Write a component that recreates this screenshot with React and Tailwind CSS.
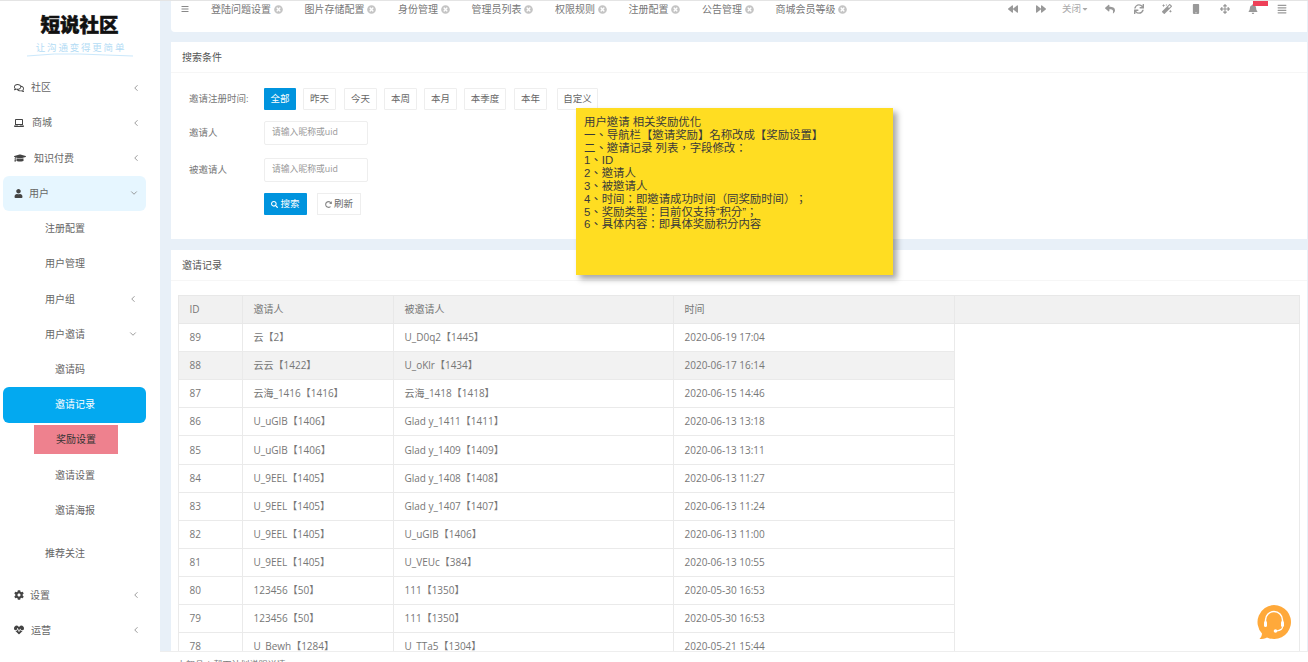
import React from "react";
import {
  FaRegComments, FaLaptop, FaGraduationCap, FaUser, FaCog, FaHeartbeat, FaSearch,
  FaBackward, FaForward, FaReply, FaSync, FaMagic, FaMobile, FaArrowsAlt, FaBell, FaAlignJustify,
  FaCaretDown, FaBars, FaTimesCircle, FaRedoAlt,
} from "react-icons/fa";
import { LuChevronLeft, LuChevronDown } from "react-icons/lu";

const sans = { fontFamily: '"Open Sans","Noto Sans CJK SC",sans-serif' };

const tabs = ["登陆问题设置", "图片存储配置", "身份管理", "管理员列表", "权限规则", "注册配置", "公告管理", "商城会员等级"];
const ranges = [
  { label: "全部", cls: "w-[32px]", active: true },
  { label: "昨天", cls: "w-[33px] ml-[7px]" },
  { label: "今天", cls: "w-[33px] ml-[8px]" },
  { label: "本周", cls: "w-[33px] ml-[7px]" },
  { label: "本月", cls: "w-[33px] ml-[7px]" },
  { label: "本季度", cls: "w-[42px] ml-[7px]" },
  { label: "本年", cls: "w-[33px] ml-[8px]" },
  { label: "自定义", cls: "w-[41px] ml-[10px]" },
];
const rows = [
  ["89", "云【2】", "U_D0q2【1445】", "2020-06-19 17:04"],
  ["88", "云云【1422】", "U_oKlr【1434】", "2020-06-17 16:14"],
  ["87", "云海_1416【1416】", "云海_1418【1418】", "2020-06-15 14:46"],
  ["86", "U_uGIB【1406】", "Glad y_1411【1411】", "2020-06-13 13:18"],
  ["85", "U_uGIB【1406】", "Glad y_1409【1409】", "2020-06-13 13:11"],
  ["84", "U_9EEL【1405】", "Glad y_1408【1408】", "2020-06-13 11:27"],
  ["83", "U_9EEL【1405】", "Glad y_1407【1407】", "2020-06-13 11:24"],
  ["82", "U_9EEL【1405】", "U_uGIB【1406】", "2020-06-13 11:00"],
  ["81", "U_9EEL【1405】", "U_VEUc【384】", "2020-06-13 10:55"],
  ["80", "123456【50】", "111【1350】", "2020-05-30 16:53"],
  ["79", "123456【50】", "111【1350】", "2020-05-30 16:53"],
  ["78", "U_Bewh【1284】", "U_TTa5【1304】", "2020-05-21 15:44"],
];
const noteLines = [
  "用户邀请 相关奖励优化",
  "一、导航栏【邀请奖励】名称改成【奖励设置】",
  "二、邀请记录 列表，字段修改：",
  "1、ID",
  "2、邀请人",
  "3、被邀请人",
  "4、时间：即邀请成功时间（同奖励时间）；",
  "5、奖励类型：目前仅支持“积分”；",
  "6、具体内容：即具体奖励积分内容",
];

const MenuRow = ({ icon: Icon, label, gap, size = "text-[10px]", open }) => (
  <div className="h-[35.25px] flex items-center pl-[14px] pr-[19px] text-[10px] text-[#666]">
    <Icon className={`${size} text-[#444] shrink-0`} />
    <span className={gap}>{label}</span>
    <span className="ml-auto text-[#888]">
      {open ? <LuChevronDown className="text-[10px]" /> : <LuChevronLeft className="text-[10px]" />}
    </span>
  </div>
);

const SubRow = ({ label, indent = "pl-[45px]", arrow }) => (
  <div className={`h-[35.25px] flex items-center pr-[22px] text-[10px] text-[#666] ${indent}`}>
    <span>{label}</span>
    {arrow === "left" && <LuChevronLeft className="ml-auto text-[10px] text-[#888]" />}
    {arrow === "down" && <LuChevronDown className="ml-auto text-[10px] text-[#888]" />}
  </div>
);

const Sidebar = () => (
  <aside className="w-[160px] shrink-0 bg-white">
    <div className="h-[70px] flex flex-col items-center pr-[1px] pt-[12px]">
      <div className="text-[19.5px] leading-[25px] font-black text-[#111] [-webkit-text-stroke:0.5px_#111]">短说社区</div>
      <div className="mt-[5px] text-[9.5px] leading-[11px] text-[#b4dcf5] tracking-[1.8px] pl-[3px]">让沟通变得更简单</div>
      <svg width="110" height="4" viewBox="0 0 110 4">
        <path d="M2 3 Q 30 0 55 1 T 108 3" fill="none" stroke="#cbe8fb" strokeWidth="1" />
      </svg>
    </div>
    <MenuRow icon={FaRegComments} label="社区" gap="ml-[7px]" />
    <MenuRow icon={FaLaptop} label="商城" gap="ml-[8px]" />
    <MenuRow icon={FaGraduationCap} label="知识付费" size="text-[12px]" gap="ml-[8px]" />
    <div className="ml-[3px] w-[143px] h-[35.25px] rounded-[6px] bg-[#e6f6ff] flex items-center pl-[11px] pr-[7px] text-[10px] text-[#666]">
      <FaUser className="text-[9px] text-[#444]" />
      <span className="ml-[6px]">用户</span>
      <LuChevronDown className="ml-auto text-[10px] text-[#888]" />
    </div>
    <SubRow label="注册配置" />
    <SubRow label="用户管理" />
    <SubRow label="用户组" arrow="left" />
    <SubRow label="用户邀请" arrow="down" />
    <SubRow label="邀请码" indent="pl-[55px]" />
    <div className="ml-[3px] w-[143px] h-[35.25px] rounded-[6px] bg-[#03a9f0] flex items-center pl-[52px] text-[10px] text-white">邀请记录</div>
    <div className="h-[35.25px] pl-[34px] pt-[2px]">
      <div className="w-[84px] h-[29px] bg-[#ee818e] text-[10px] text-[#333] flex items-center justify-center">奖励设置</div>
    </div>
    <SubRow label="邀请设置" indent="pl-[55px]" />
    <SubRow label="邀请海报" indent="pl-[55px]" />
    <div className="mt-[8px]"><SubRow label="推荐关注" /></div>
    <div className="mt-[6px]">
      <MenuRow icon={FaCog} label="设置" gap="ml-[6px]" />
      <MenuRow icon={FaHeartbeat} label="运营" gap="ml-[7px]" />
    </div>
  </aside>
);

const TopBar = () => (
  <div className="relative h-[32px] bg-white rounded-bl-[4px] flex items-start pl-[10px] pr-[11px] pt-[3px] text-[#999]">
    <FaBars className="text-[8px] mt-[2px] text-[#888]" />
    <div className="ml-[22px] flex gap-[22px] text-[10px] leading-[12px] text-[#777]">
      {tabs.map((t) => (
        <span key={t} className="flex items-center gap-[2.5px]">
          {t}
          <FaTimesCircle className="text-[9px] text-[#c4c4c4]" />
        </span>
      ))}
    </div>
    <div className="ml-auto flex items-center h-[12px] text-[#999] text-[10px]">
      <span className="w-[28.5px] flex justify-center"><FaBackward /></span>
      <span className="w-[28.5px] flex justify-center"><FaForward /></span>
      <span className="w-[40px] flex justify-center items-center text-[9.5px] text-[#aaa]">关闭<FaCaretDown className="text-[8px]" /></span>
      <span className="w-[29px] flex justify-center"><FaReply /></span>
      <span className="w-[28.5px] flex justify-center"><FaSync /></span>
      <span className="w-[28.5px] flex justify-center"><FaMagic /></span>
      <span className="w-[28.5px] flex justify-center"><FaMobile /></span>
      <span className="w-[29px] flex justify-center"><FaArrowsAlt /></span>
      <span className="w-[28.5px] flex justify-center"><FaBell /></span>
      <span className="w-[28.5px] flex justify-center"><FaAlignJustify /></span>
    </div>
    <span className="absolute top-0 right-[39px] w-[15px] h-[6px] bg-[#ee4058]" />
  </div>
);

const SearchCard = () => (
  <section className="mt-[10px] h-[197px] bg-white">
    <div className="h-[31px] pl-[11px] flex items-center border-b border-[#f6f6f6] text-[10px] text-[#555]">搜索条件</div>
    <div className="pt-[15px] text-[9.5px] text-[#777]">
      <div className="flex items-center h-[22px]">
        <label className="w-[93px] pl-[18px]">邀请注册时间:</label>
        <div className="flex">
          {ranges.map((r) => (
            <span
              key={r.label}
              className={`h-[22px] flex items-center justify-center text-[9.5px] rounded-[1px] ${r.cls} ${
                r.active ? "bg-[#0094de] text-white" : "border border-[#eee] text-[#666]"
              }`}
            >
              {r.label}
            </span>
          ))}
        </div>
      </div>
      <div className="flex items-center h-[24px] mt-[11px]">
        <label className="w-[93px] pl-[18px]">邀请人</label>
        <div className="w-[104px] h-[24px] border border-[#eee] rounded-[2px] flex items-center pl-[7px] text-[8.8px] text-[#999]">请输入昵称或uid</div>
      </div>
      <div className="flex items-center h-[24px] mt-[13px]">
        <label className="w-[93px] pl-[18px]">被邀请人</label>
        <div className="w-[104px] h-[24px] border border-[#eee] rounded-[2px] flex items-center pl-[7px] text-[8.8px] text-[#999]">请输入昵称或uid</div>
      </div>
      <div className="flex items-center h-[22px] mt-[11px] pl-[93px]">
        <span className="w-[43px] h-[22px] bg-[#0094de] text-white text-[9.5px] flex items-center justify-center gap-[2px] rounded-[1px]">
          <FaSearch className="text-[7px]" />搜索
        </span>
        <span className="ml-[10px] w-[44px] h-[22px] border border-[#eee] text-[#666] text-[9.5px] flex items-center justify-center gap-[2px]">
          <FaRedoAlt className="text-[7px] text-[#888]" />刷新
        </span>
      </div>
    </div>
  </section>
);

const RecordCard = () => (
  <section className="mt-[11px] bg-white pb-[20px]">
    <div className="h-[31px] pl-[11px] flex items-center border-b border-[#f6f6f6] text-[10px] text-[#555]">邀请记录</div>
    <div className="pt-[14px] pl-[7px] pr-[7px]">
      <table className="w-full table-fixed border-collapse text-[10px] text-[#777]">
        <colgroup>
          <col className="w-[64px]" />
          <col className="w-[151px]" />
          <col className="w-[280px]" />
          <col className="w-[281px]" />
          <col />
        </colgroup>
        <thead>
          <tr className="h-[28px] bg-[#f1f1f1]">
            {["ID", "邀请人", "被邀请人", "时间", ""].map((h, i) => (
              <th key={i} className="border border-[#e8e8e8] pl-[10.5px] text-left font-normal">{h}</th>
            ))}
          </tr>
        </thead>
        <tbody>
          {rows.map((r, i) => (
            <tr key={r[0]} className={`${i === 4 ? "h-[29px]" : "h-[28px]"} ${i === 1 ? "bg-[#f2f2f2]" : ""}`}>
              {r.map((c, j) => (
                <td key={j} className="border border-[#eaeaea] pl-[10.5px] whitespace-nowrap">{c}</td>
              ))}
              {i === 0 && <td rowSpan={rows.length} className="border border-[#eaeaea] bg-white" />}
            </tr>
          ))}
        </tbody>
      </table>
    </div>
  </section>
);

export default function App() {
  return (
    <div className="relative w-[1308px] h-[662px] overflow-hidden flex bg-white" style={sans}>
      <Sidebar />
      <main className="flex-1 min-w-0 flex flex-col h-[662px]">
        <div className="h-[651px] overflow-hidden bg-[#e8f0f8] pl-[11px] pr-[1px] shrink-0">
          <TopBar />
          <SearchCard />
          <RecordCard />
        </div>
        <footer className="flex-1 bg-white border-t border-[#eee] pl-[17px] text-[9px] leading-[14px] pt-[6px] text-[#777] overflow-hidden">
          上架品 | 帮下计划说明详情
        </footer>
      </main>

      {/* top hairline */}
      <div className="absolute top-0 left-0 w-full h-px bg-[#e4e4e4]" />

      <div className="absolute left-[576px] top-[108px] w-[317px] h-[167px] bg-[#ffdd22] pt-[8px] pl-[8px] text-[11.4px] leading-[12.8px] text-[#3a3a3a] shadow-[4px_4px_6px_rgba(0,0,0,0.35)] [text-spacing-trim:space-all]"
        style={{ fontFamily: '"Liberation Sans","Noto Sans CJK TC",sans-serif' }}>
        {noteLines.map((l) => <div key={l}>{l}</div>)}
      </div>

      <div className="absolute left-[1256px] top-[604px]">
        <svg width="36" height="36" viewBox="0 0 36 36">
          <path d="M18 1a17 17 0 1 1-7 32.500c-2 1-4.500 1.500-7.500 1.500 1.500-1.500 2.500-3.500 2.500-5.500A17 17 0 0 1 18 1z" fill="#ffa93a" />
          <path d="M9.500 19v-3a8.500 8.500 0 0 1 17 0v3" fill="none" stroke="#fff" strokeWidth="1.500" />
          <rect x="8" y="17" width="3" height="6" rx="1.500" fill="#fff" />
          <rect x="25" y="17" width="3" height="6" rx="1.500" fill="#fff" />
          <path d="M26.500 23c0 2.500-3 3.500-6 4" fill="none" stroke="#fff" strokeWidth="1.200" />
          <circle cx="19.500" cy="27" r="1.800" fill="#fff" />
        </svg>
      </div>
    </div>
  );
}
